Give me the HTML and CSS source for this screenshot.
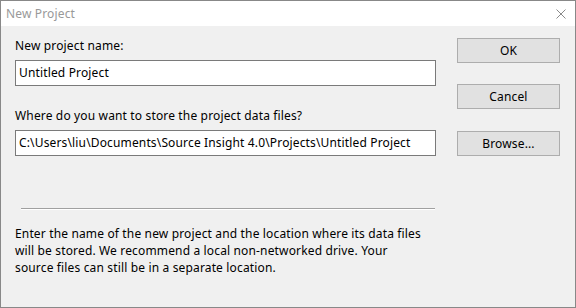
FILE: index.html
```html
<!DOCTYPE html>
<html lang="en">
<head>
  <meta charset="UTF-8">
  <title>New Project</title>
  <link rel="stylesheet" href="styles.css">
</head>
<body>
  <div class="dialog">
    <div class="titlebar">
      <span class="title">New Project</span>
      <svg class="close" width="10" height="10" viewBox="0 0 10 10">
        <path d="M0.5 0.5 L9.5 9.5 M9.5 0.5 L0.5 9.5" stroke="#8a8a8a" stroke-width="1" fill="none"/>
      </svg>
    </div>
    <div class="content">
      <div class="fields">
        <div class="label first">New project name:</div>
        <div class="input">Untitled Project</div>
        <div class="label second">Where do you want to store the project data files?</div>
        <div class="input">C:\Users\liu\Documents\Source Insight 4.0\Projects\Untitled Project</div>
        <div class="separator"></div>
        <p class="help">Enter the name of the new project and the location where its data files<br>will be stored. We recommend a local non-networked drive. Your<br>source files can still be in a separate location.</p>
      </div>
      <div class="buttons">
        <button class="ok">OK</button>
        <button class="cancel">Cancel</button>
        <button class="browse">Browse...</button>
      </div>
    </div>
  </div>
</body>
</html>
```

FILE: styles.css
```css
body {
  margin: 0;
  background: #f0f0f0;
  font-family: "Noto Sans", "Liberation Sans", sans-serif;
  font-size: 12px;
  letter-spacing: 0.15px;
  color: #000;
}

.dialog {
  width: 576px;
  height: 308px;
  box-sizing: border-box;
  border: 1px solid #888;
  background: #f0f0f0;
}

.titlebar {
  height: 25px;
  background: #fff;
  display: flex;
  align-items: center;
  justify-content: space-between;
  padding: 0 9px 0 5px;
}

.title {
  color: #999;
}

.content {
  display: flex;
  padding: 0 0 0 14px;
}

.fields {
  width: 421px;
}

.label {
  height: 17px;
  line-height: 17px;
}

.label.first {
  margin-top: 11px;
}

.label.second {
  margin-top: 21px;
}

.input {
  margin-top: 6px;
  height: 26px;
  box-sizing: border-box;
  border: 1px solid #7a7a7a;
  background: #fff;
  line-height: 24px;
  padding-left: 3px;
  white-space: nowrap;
}

.separator {
  margin: 52px 1px 0 6px;
  border-top: 1px solid #a0a0a0;
  border-bottom: 1px solid #fff;
}

.help {
  margin: 15px 0 0;
  line-height: 17px;
  white-space: nowrap;
}

.buttons {
  display: flex;
  flex-direction: column;
  margin-left: 21px;
  width: 103px;
}

button {
  height: 25px;
  box-sizing: border-box;
  border: 1px solid #adadad;
  background: #e1e1e1;
  font-family: inherit;
  font-size: 12px;
  letter-spacing: 0.15px;
  color: #000;
  padding: 0;
}

.ok {
  margin-top: 12px;
}

.cancel {
  margin-top: 21px;
}

.browse {
  margin-top: 22px;
}
```
